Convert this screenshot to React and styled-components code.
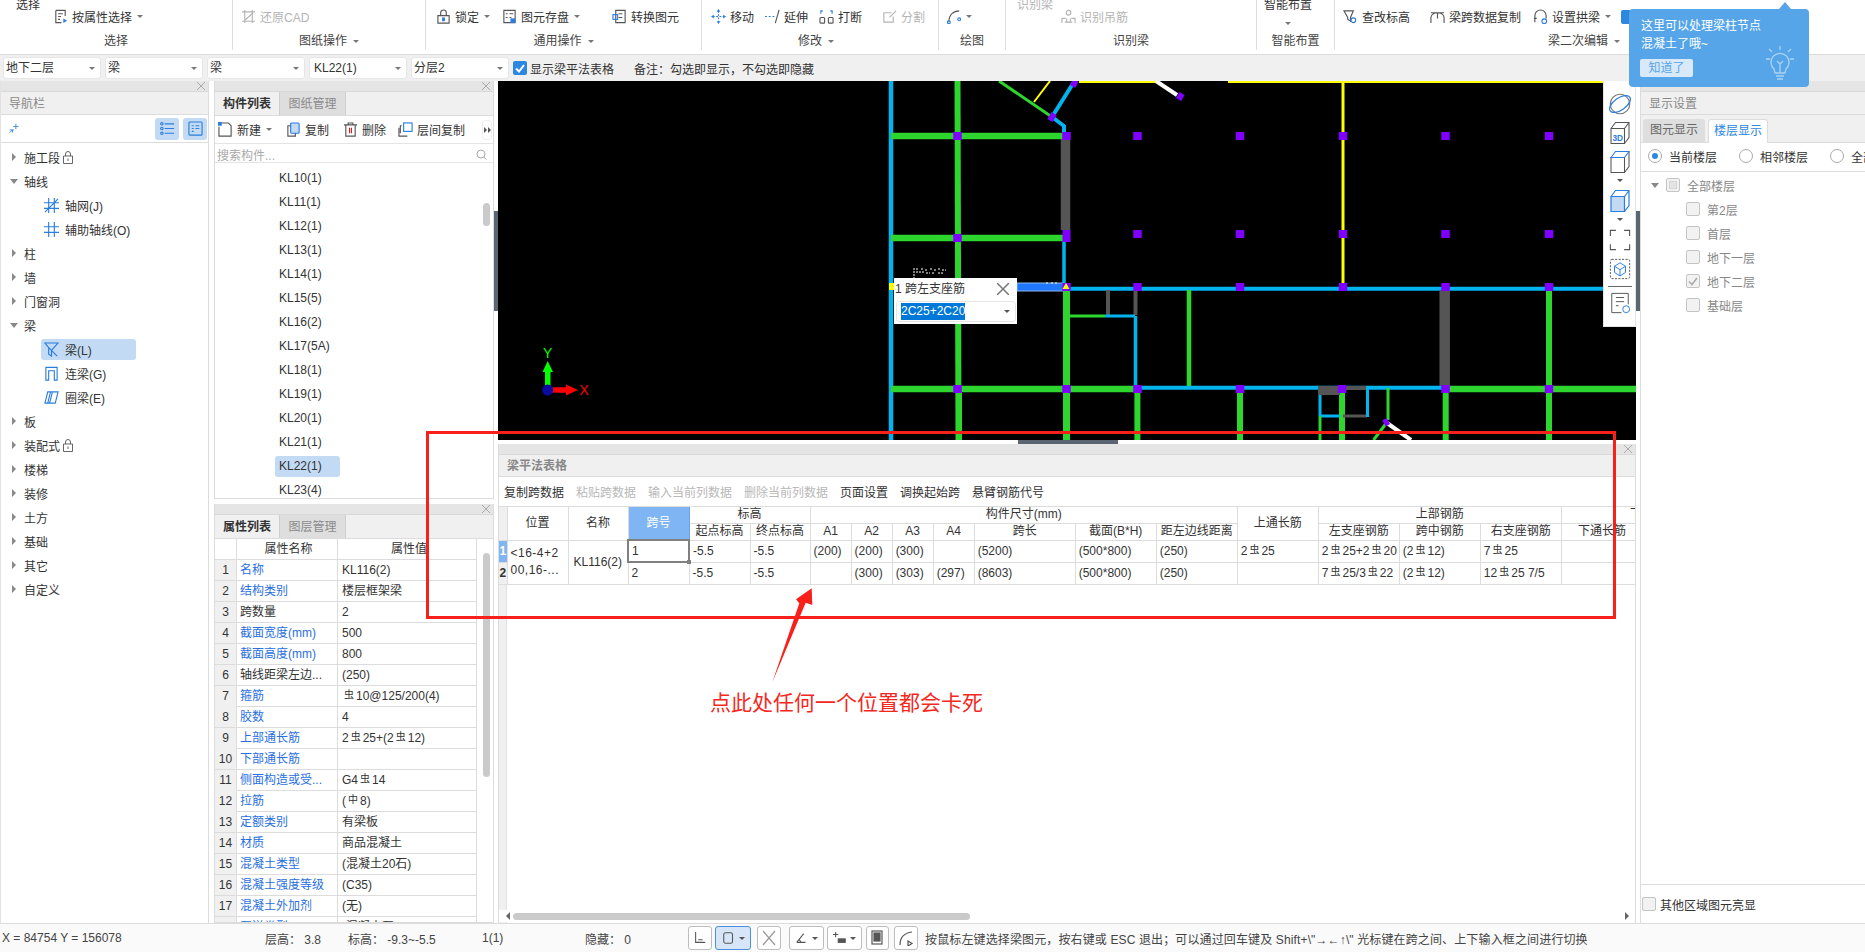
import React from 'react';
import styled, { createGlobalStyle } from 'styled-components';

const FONT = '"Liberation Sans", "Noto Sans CJK SC", sans-serif';

const Global = createGlobalStyle`
    html, body { margin: 0; padding: 0; background: #fff; }
    body { font-family: ${FONT}; font-size: 12px; color: #333; overflow: hidden; }
    * { box-sizing: border-box; }
`;

const Page = styled.div`
    position: relative;
    width: 1865px;
    height: 952px;
    overflow: hidden;
    display: flex;
    flex-direction: column;
`;

/* ---------- ribbon ---------- */
const Ribbon = styled.div`
    height: 55px;
    display: flex;
    border-bottom: 1px solid #dcdcdc;
    background: #fff;
    flex: none;
`;
const Group = styled.div`
    width: ${p => p.$w}px;
    height: 50px;
    flex: none;
    position: relative;
    border-right: ${p => (p.$last ? 'none' : '1px solid #dedede')};
    display: flex;
    flex-direction: column;
`;
const GroupBody = styled.div`
    height: 33px;
    display: flex;
    align-items: flex-start;
`;
const GroupLabel = styled.div`
    height: 17px;
    line-height: 17px;
    font-size: 12px;
    color: #444;
    display: flex;
    justify-content: ${p => (p.$start ? 'flex-start' : 'center')};
    gap: 6px;
    align-items: center;
    padding-left: ${p => p.$pad || 0}px;
    transform: translateX(${p => p.$dx || 0}px);
`;
const Tool = styled.div`
    display: flex;
    align-items: center;
    gap: 4px;
    height: 22px;
    margin-top: 5px;
    margin-left: ${p => p.$ml || 0}px;
    white-space: nowrap;
    flex: none;
    color: ${p => (p.$off ? '#b4b4b4' : '#333')};
`;
const StackedTool = styled.div`
    width: ${p => p.$w}px;
    flex: none;
    margin-top: -3px;
    margin-left: ${p => p.$ml || 0}px;
    text-align: center;
    line-height: 16px;
    color: ${p => (p.$off ? '#b4b4b4' : '#333')};
`;
const Caret = styled.span`
    display: inline-block;
    width: 0;
    height: 0;
    margin-left: ${p => p.$ml ?? 1}px;
    border-left: 3px solid transparent;
    border-right: 3px solid transparent;
    border-top: 3px solid ${p => p.$c || '#777'};
`;

/* ---------- select row ---------- */
const SelectRow = styled.div`
    height: 26px;
    flex: none;
    background: #f0f0f0;
    display: flex;
    align-items: center;
    padding-left: 3px;
    gap: 4px;
`;
const Select = styled.div`
    width: 98px;
    height: 22px;
    background: #fff;
    border: 1px solid #e6e6e6;
    border-radius: 3px;
    padding-left: ${p => p.$pad || 2}px;
    line-height: 20px;
    display: flex;
    justify-content: space-between;
    align-items: center;
    padding-right: 5px;
    color: #333;
`;
const ShowCheck = styled.span`
    width: 14px;
    height: 14px;
    background: #2b87e0;
    border-radius: 2px;
    display: flex;
    align-items: center;
    justify-content: center;
    flex: none;
`;
const ShowLabel = styled.span`
    margin-left: -1px;
    white-space: nowrap;
`;
const Note = styled.span`
    margin-left: 16px;
    white-space: nowrap;
`;

/* ---------- body columns ---------- */
const Main = styled.div`
    flex: 1;
    display: flex;
    min-height: 0;
`;
const LeftCol = styled.div`
    width: 209px;
    flex: none;
    border-right: 1px solid #dcdcdc;
    border-left: 1px solid #e2e2e2;
    display: flex;
    flex-direction: column;
`;
const MiddleCol = styled.div`
    width: 280px;
    margin-left: 5px;
    flex: none;
    display: flex;
    flex-direction: column;
`;
const Pane = styled.div`
    border: 1px solid #dcdcdc;
    border-top: none;
    display: flex;
    flex-direction: column;
    height: ${p => (p.$h ? p.$h + 'px' : 'auto')};
    flex: ${p => (p.$h ? 'none' : '1')};
    margin-top: ${p => p.$mt || 0}px;
    min-height: 0;
    overflow: hidden;
    background: #fff;
`;
const DockBar = styled.div`
    height: 11px;
    flex: none;
    background: #e5e5e5;
    border-bottom: 1px solid #d8d8d8;
    display: flex;
    justify-content: flex-end;
    align-items: center;
    padding-right: 3px;
`;
const PanelTitle = styled.div`
    height: ${p => p.$h || 23}px;
    flex: none;
    background: #f0f0f0;
    border-bottom: 1px solid #dcdcdc;
    line-height: ${p => (p.$h || 23) + 1}px;
    padding-left: 8px;
    color: #888;
    font-weight: ${p => (p.$bold ? 700 : 400)};
`;
const IconRow = styled.div`
    height: 28px;
    flex: none;
    display: flex;
    align-items: center;
    justify-content: space-between;
    border-bottom: 1px solid #dcdcdc;
    padding: 0 1px 0 8px;
`;
const ToggleSet = styled.div`
    display: flex;
    gap: 4px;
`;
const Toggle = styled.div`
    width: 24px;
    height: 22px;
    background: #c2daf3;
    border-radius: 3px;
    display: flex;
    align-items: center;
    justify-content: center;
`;
const Tree = styled.div`
    padding-top: 2px;
`;
const TreeRow = styled.div`
    height: 24px;
    display: flex;
    align-items: center;
    padding-left: ${p => (p.$child ? 15 : 11)}px;
    color: #333;
    white-space: nowrap;
`;
const Arrow = styled.span`
    width: ${p => p.$w || 12}px;
    flex: none;
    display: flex;
    &::before {
        content: '';
        display: block;
        border-style: solid;
        ${p => (p.$open
            ? 'border-width: 5px 4px 0 4px; border-color: #888 transparent transparent transparent; margin-left: -2px;'
            : 'border-width: 4px 0 4px 4px; border-color: transparent transparent transparent #888;')}
    }
`;
const ChildItem = styled.div`
    margin-left: 25px;
    width: 95px;
    height: 21px;
    border-radius: 3px;
    padding-left: 3px;
    display: flex;
    align-items: center;
    gap: 6px;
    background: ${p => (p.$on ? '#c2daf3' : 'transparent')};
`;
const LockMark = styled.span`
    margin-left: 3px;
    display: flex;
`;

const TabRow = styled.div`
    height: 24px;
    flex: none;
    background: #f0f0f0;
    border-bottom: 1px solid #dcdcdc;
    display: flex;
`;
const Tab = styled.div`
    width: ${p => (p.$on ? 65 : 66)}px;
    text-align: center;
    line-height: 25px;
    font-weight: ${p => (p.$on ? 700 : 400)};
    color: ${p => (p.$on ? '#333' : '#8a8a8a')};
    background: ${p => (p.$on ? '#f0f0f0' : '#dedede')};
    border-right: 1px solid #cfcfcf;
`;
const ListTools = styled.div`
    height: 28px;
    flex: none;
    display: flex;
    align-items: center;
    padding-left: 3px;
    position: relative;
    border-bottom: 1px solid #e4e4e4;
`;
const ListTool = styled.div`
    display: flex;
    align-items: center;
    gap: 4px;
    margin-right: ${p => p.$mr || 10}px;
    white-space: nowrap;
`;
const More = styled.div`
    position: absolute;
    right: 1px;
    top: 4px;
    width: 10px;
    height: 20px;
    border: 1px solid #eee;
    border-radius: 3px;
    display: flex;
    align-items: center;
    justify-content: center;
`;
const Search = styled.div`
    height: 19px;
    flex: none;
    border-bottom: 1px solid #e4e4e4;
    color: #aaa;
    padding-left: 2px;
    padding-top: 2px;
    display: flex;
    justify-content: space-between;
    align-items: center;
    padding-right: 6px;
`;
const ListBody = styled.div`
    flex: 1;
    position: relative;
    overflow: hidden;
    padding-top: 3px;
`;
const ListRow = styled.div`
    height: 24px;
    line-height: 24px;
    padding-left: 64px;
    color: #333;
    position: relative;
    span {
        display: inline-block;
        line-height: 21px;
        width: 65px;
        padding-left: 4px;
        margin-left: -4px;
        border-radius: 3px;
        background: ${p => (p.$on ? '#c2daf3' : 'transparent')};
    }
`;
const Thumb = styled.div`
    position: absolute;
    right: 3px;
    top: ${p => p.$top}px;
    width: 7px;
    height: ${p => p.$h}px;
    background: #cacaca;
    border-radius: 4px;
`;

const PropGrid = styled.div`
    position: relative;
    flex: 1;
    overflow: hidden;
`;
const PropRow = styled.div`
    display: grid;
    grid-template-columns: 22px 101px 139px;
    height: 21px;
    border-bottom: 1px solid #dcdcdc;
    width: 262px;
    color: #333;
`;
const PropNum = styled.div`
    background: ${p => (p.$head ? '#fff' : '#f0f0f0')};
    border-right: 1px solid #dcdcdc;
    text-align: center;
    line-height: 20px;
`;
const PropName = styled.div`
    border-right: 1px solid #dcdcdc;
    line-height: 20px;
    padding-left: 3px;
    white-space: nowrap;
    overflow: hidden;
    text-align: ${p => (p.$head ? 'center' : 'left')};
    color: ${p => (p.$link ? '#2a6fe0' : '#333')};
`;
const PropVal = styled.div`
    border-right: 1px solid #dcdcdc;
    line-height: 20px;
    padding-left: 4px;
    white-space: nowrap;
    text-align: ${p => (p.$head ? 'center' : 'left')};
`;

/* ---------- centre ---------- */
const Centre = styled.div`
    width: 1142px;
    flex: none;
    padding-left: 4px;
    display: flex;
    flex-direction: column;
    position: relative;
`;
const Canvas = styled.div`
    position: relative;
    height: 359px;
    flex: none;
    background: #000;
`;
const CanvasSvg = styled.svg`
    display: block;
    width: 1138px;
    height: 359px;
`;
const Handle = styled.div`
    width: 100px;
    height: 4px;
    background: #5b6672;
    margin-left: 520px;
    flex: none;
`;
const EditPopup = styled.div`
    position: absolute;
    left: 396px;
    top: 197px;
    width: 123px;
    height: 46px;
    background: #fff;
`;
const PopupHead = styled.div`
    height: 22px;
    line-height: 22px;
    padding-left: 1px;
    display: flex;
    justify-content: space-between;
    align-items: center;
    padding-right: 8px;
    color: #333;
`;
const PopupInput = styled.div`
    margin: 1px 1px 0 2px;
    height: 21px;
    border: 1px solid #e6e6e6;
    border-radius: 3px;
    padding-left: 4px;
    display: flex;
    align-items: center;
    justify-content: space-between;
    padding-right: 5px;
    mark {
        background: #0078d7;
        color: #fff;
        line-height: 17px;
        padding: 0;
        display: block;
    }
`;
const ViewBar = styled.div`
    position: absolute;
    right: 0;
    top: 0;
    width: 33px;
    height: 246px;
    background: #fff;
    border: 1px solid #e4e4e4;
    border-top: none;
    display: flex;
    flex-direction: column;
    align-items: center;
    padding-top: 11px;
`;
const ViewIcon = styled.div`
    height: ${p => p.$h || 29}px;
    flex: none;
    display: flex;
    justify-content: center;
    align-items: flex-start;
`;
const ViewRule = styled.div`
    width: 24px;
    height: 1px;
    flex: none;
    background: #666;
    margin: 1px 0 5px;
`;

/* ---------- beam table ---------- */
const BeamPanel = styled.div`
    flex: 1;
    display: flex;
    flex-direction: column;
    min-height: 0;
    border: 1px solid #dcdcdc;
    border-top: none;
    border-bottom: none;
    position: relative;
    overflow: hidden;
`;
const BeamTools = styled.div`
    height: 30px;
    flex: none;
    display: flex;
    align-items: center;
    padding-left: 5px;
    gap: 12px;
    border-bottom: 1px solid #dcdcdc;
    white-space: nowrap;
`;
const BeamTool = styled.span`
    color: ${p => (p.$off ? '#b8b8b8' : '#333')};
`;
const GutterStrip = styled.div`
    position: absolute;
    left: 0;
    top: 63px;
    bottom: 0;
    width: 8px;
    background: #f0f0f0;
    border-right: 1px solid #e2e2e2;
`;
const BeamTable = styled.table`
    position: relative;
    border-collapse: collapse;
    table-layout: fixed;
    width: 1144px;
    color: #333;
    th, td {
        border: 1px solid #dcdcdc;
        font-weight: 400;
        padding: 0;
        white-space: nowrap;
        overflow: hidden;
        background: #fff;
    }
    th { text-align: center; height: 17px; line-height: 15px; }
    td { height: 21px; padding-left: 3px; line-height: 20px; }
    tr:first-child th { border-top: none; height: 16px; }
`;
const RowMark = styled.td`
    && {
        padding: 0;
        background: ${p => (p.$on ? '#7fb5f2' : '#f0f0f0')};
        color: ${p => (p.$on ? '#fff' : '#333')};
        font-weight: 700;
        text-align: center;
        border-left: none;
    }
`;
const GutterHead = styled.th`
    && { background: #f0f0f0; border-left: none; }
`;
const SpanHead = styled.th`
    && { background: #7fb5f2; color: #fff; border: 1px solid #66a3ea; }
`;
const LastHead = styled.th`
    && { text-align: left; padding-left: 68px; }
`;
const ActiveCell = styled.td`
    && {
        border: 2px solid #808080;
        position: relative;
        overflow: visible;
    }
    &::after {
        content: '';
        position: absolute;
        right: -3px;
        bottom: -3px;
        width: 4px;
        height: 4px;
        background: #808080;
    }
`;
const WrapCell = styled.td`
    && { line-height: 17px; padding-left: 3px; letter-spacing: .5px; }
`;
const NameCell = styled.td`
    && { text-align: center; padding: 0; }
`;
const HScroll = styled.div`
    position: absolute;
    left: 0;
    right: 0;
    bottom: 1px;
    height: 12px;
    background: #fff;
    z-index: 1;
    display: flex;
    align-items: center;
    padding-left: 9px;
`;
const HThumb = styled.div`
    width: 457px;
    height: 7px;
    margin-left: 5px;
    background: #cacaca;
    border-radius: 4px;
`;
const ScrollEnd = styled.span`
    position: absolute;
    ${p => (p.$right ? 'right: 6px;' : 'left: 7px;')}
    border-style: solid;
    border-width: 4px 0 4px 0;
    border-color: transparent;
    ${p => (p.$right ? 'border-left: 4px solid #666;' : 'border-right: 4px solid #666;')}
`;
const Rebar = styled.span`
    font-size: 10px;
    position: relative;
    top: -2px;
    margin: 0 2px;
`;

/* ---------- right panel ---------- */
const RightCol = styled.div`
    width: 225px;
    margin-left: 4px;
    flex: none;
    border-left: 1px solid #dcdcdc;
    display: flex;
    flex-direction: column;
    position: relative;
`;
const RightTabs = styled.div`
    height: 28px;
    flex: none;
    display: flex;
    padding: 4px 0 0 2px;
    gap: 3px;
    background: #f0f0f0;
    border-bottom: 1px solid #dcdcdc;
`;
const RightTab = styled.div`
    width: ${p => (p.$on ? 60 : 62)}px;
    height: 24px;
    text-align: center;
    line-height: 22px;
    border-radius: 3px 3px 0 0;
    background: ${p => (p.$on ? '#fff' : '#dedede')};
    border: ${p => (p.$on ? '1px solid #dcdcdc' : 'none')};
    border-bottom: none;
    color: ${p => (p.$on ? '#2b87e0' : '#666')};
`;
const RadioRow = styled.div`
    height: 29px;
    flex: none;
    display: flex;
    align-items: center;
    padding: 0 0 2px 7px;
    border-bottom: 1px solid #dcdcdc;
    white-space: nowrap;
    overflow: hidden;
`;
const RadioItem = styled.div`
    display: flex;
    align-items: center;
    gap: 7px;
    width: 91px;
    flex: none;
`;
const Radio = styled.span`
    width: 14px;
    height: 14px;
    border: 1px solid #aaa;
    border-radius: 50%;
    flex: none;
    display: flex;
    align-items: center;
    justify-content: center;
    &::after {
        content: '';
        width: 6px;
        height: 6px;
        border-radius: 50%;
        background: ${p => (p.$on ? '#2b87e0' : 'transparent')};
    }
`;
const FloorTree = styled.div`
    flex: 1;
    padding-top: 1px;
    border-bottom: 1px solid #dcdcdc;
`;
const FloorRow = styled.div`
    height: 24px;
    display: flex;
    align-items: center;
    gap: 7px;
    padding-left: ${p => (p.$root ? 12 : 45)}px;
    color: #888;
`;
const Box = styled.span`
    width: 14px;
    height: 14px;
    flex: none;
    background: #f2f2f2;
    border: 1px solid #c4c4c4;
    border-radius: 2px;
    display: flex;
    align-items: center;
    justify-content: center;
`;
const RootMark = styled.span`
    width: 8px;
    height: 8px;
    background: #e4e4e4;
    border: 1px solid #d4d4d4;
`;
const RightFoot = styled.div`
    height: 38px;
    flex: none;
    display: flex;
    align-items: center;
    gap: 4px;
    padding-left: 1px;
    color: #333;
`;
const SideHandle = styled.div`
    position: absolute;
    left: ${p => p.$left}px;
    top: 130px;
    width: 4px;
    height: 100px;
    background: #5b6672;
`;

/* ---------- status ---------- */
const Status = styled.div`
    height: 29px;
    flex: none;
    border-top: 1px solid #dcdcdc;
    background: #fafafa;
    display: flex;
    align-items: center;
    white-space: nowrap;
    position: relative;
    color: #444;
`;
const StatusText = styled.span`
    position: relative;
    width: ${p => p.$w}px;
    padding-left: ${p => p.$pl || 0}px;
    flex: none;
`;
const StatusBtn = styled.div`
    width: ${p => p.$w}px;
    height: 24px;
    flex: none;
    margin-right: ${p => p.$mr || 3}px;
    border: 1px solid ${p => (p.$on ? '#4a90dc' : '#bdbdbd')};
    background: ${p => (p.$on ? '#d6e6f8' : '#fff')};
    border-radius: 3px;
    display: flex;
    align-items: center;
    justify-content: center;
    gap: 3px;
`;
const Hint = styled.span`
    margin-left: 1px;
    letter-spacing: .13px;
`;

/* ---------- overlays ---------- */
const Tip = styled.div`
    position: absolute;
    left: 1629px;
    top: 9px;
    width: 180px;
    height: 78px;
    background: #55a5e8;
    border-radius: 4px;
    color: #fff;
    padding: 8px 12px;
    line-height: 18px;
    &::before {
        content: '';
        position: absolute;
        right: 18px;
        top: -7px;
        border-left: 6px solid transparent;
        border-right: 6px solid transparent;
        border-bottom: 7px solid #55a5e8;
    }
`;
const TipBtn = styled.div`
    position: absolute;
    left: 11px;
    top: 50px;
    width: 53px;
    height: 18px;
    border-radius: 2px;
    background: #d8e9fa;
    color: #55a5e8;
    text-align: center;
    line-height: 18px;
`;
const TipBulb = styled.svg`
    position: absolute;
    right: 13px;
    top: 36px;
`;
const BehindTipCheck = styled.span`
    position: absolute;
    left: 1621px;
    top: 10px;
    width: 14px;
    height: 14px;
    background: #2b87e0;
    border-radius: 2px;
`;
const RedBox = styled.div`
    position: absolute;
    left: 426px;
    top: 431px;
    width: 1190px;
    height: 188px;
    border: 3px solid #f8201a;
    pointer-events: none;
`;
const RedArrow = styled.svg`
    position: absolute;
    left: 760px;
    top: 580px;
`;
const RedNote = styled.div`
    position: absolute;
    left: 710px;
    top: 689px;
    font-size: 21px;
    line-height: 28px;
    color: #f5281e;
    white-space: nowrap;
`;

/* ---------- icons ---------- */
const IcoSvg = styled.svg`
    flex: none;
`;
const Ico = ({ children, s = 15, c = '#2b7de0', w = 1.2 }) => (
    <IcoSvg width={s} height={s} viewBox="0 0 16 16" fill="none" stroke={c} strokeWidth={w}>
        {children}
    </IcoSvg>
);
const Close = ({ s = 8, c = '#aaa' }) => (
    <svg width={s} height={s} viewBox="0 0 8 8" stroke={c} strokeWidth="1"><path d="M0 0 8 8M8 0 0 8" /></svg>
);
const Lock = () => (
    <svg width="10" height="13" viewBox="0 0 10 13" fill="none" stroke="#666"><path d="M2.5 5V3a2.5 2.5 0 0 1 5 0v2M.5 5h9v7.5h-9z" /><path d="M5 7.5v2.5" /></svg>
);
const Rb = () => <Rebar>虫</Rebar>;

const COLS = [8, 61, 60, 61, 61, 60, 41, 41, 41, 41, 101, 81, 81, 81, 81, 81, 81, 81];

const LIST = ['KL10(1)', 'KL11(1)', 'KL12(1)', 'KL13(1)', 'KL14(1)', 'KL15(5)', 'KL16(2)', 'KL17(5A)', 'KL18(1)', 'KL19(1)', 'KL20(1)', 'KL21(1)', 'KL22(1)', 'KL23(4)'];
const PROPS = [
    ['名称', 'KL116(2)', 1], ['结构类别', '楼层框架梁', 1], ['跨数量', '2', 0], ['截面宽度(mm)', '500', 1],
    ['截面高度(mm)', '800', 1], ['轴线距梁左边...', '(250)', 0],
    ['箍筋', <><Rb />10@125/200(4)</>, 1], ['胶数', '4', 1],
    ['上部通长筋', <>2<Rb />25+(2<Rb />12)</>, 1], ['下部通长筋', '', 1],
    ['侧面构造或受...', <>G4<Rb />14</>, 1], ['拉筋', <>(<Rebar>中</Rebar>8)</>, 1],
    ['定额类别', '有梁板', 1], ['材质', '商品混凝土', 1], ['混凝土类型', '(混凝土20石)', 1],
    ['混凝土强度等级', '(C35)', 1], ['混凝土外加剂', '(无)', 1], ['泵送类型', '(混凝土泵)', 1],
];

/* purple grid nodes on the plan */
const NODE_ROWS = [
    [136, [957.5, 1066.5, 1137.5, 1240, 1343, 1445.5, 1549]],
    [234, [1137.5, 1240, 1343, 1445.5, 1549]],
    [238, [957.5]],
    [287, [1066.5, 1137.5, 1240, 1343, 1445.5, 1549]],
    [389, [957.5, 1066.5, 1137.5, 1240, 1342, 1445.5, 1549]],
];
const BLUE = '#00b4f0';
const GREEN = '#2ed52e';
const GREY = '#555';
const LINES = [
    // x1 y1 x2 y2 colour width
    [891, 81, 891, 440, BLUE, 4.5],
    [957.5, 81, 958.5, 440, GREEN, 6],
    [891, 136, 1064, 136, GREEN, 6.5],
    [891, 238, 1064, 238, GREEN, 6.5],
    [891, 389, 1135, 389, GREEN, 6.5],
    [999, 81, 1052, 117, GREEN, 3],
    [1050, 81, 1034, 102, '#ffff00', 2],
    [1079, 82, 1157, 82, '#ffff00', 2],
    [1228, 82, 1604, 82, '#ffff00', 2],
    [1156, 81, 1177, 95, '#fff', 4],
    [1074, 82, 1052, 117, BLUE, 4],
    [1052, 117, 1064, 126, BLUE, 4],
    [1064, 125, 1064, 136, BLUE, 4],
    [1065.5, 139, 1065.5, 230, GREY, 9.5],
    [1064, 240, 1064, 288, BLUE, 3.5],
    [1343, 81, 1343, 287, '#ffff00', 3],
    [1064, 288.7, 1604, 288.7, BLUE, 4],
    [1066.5, 291, 1066.5, 440, GREEN, 7],
    [1108, 290, 1108, 315, GREY, 4],
    [1135.5, 290, 1135.5, 315, GREY, 4],
    [1066, 316, 1105, 316, GREEN, 3],
    [1105, 316, 1135, 316, BLUE, 3],
    [1135.5, 316, 1135.5, 389, BLUE, 3.5],
    [1189, 290, 1189, 388, GREEN, 4.5],
    [1135, 387.7, 1442, 387.7, BLUE, 4],
    [1345, 388, 1366, 388, GREY, 4],
    [1444.7, 290, 1444.7, 386, GREY, 10.5],
    [1549, 291, 1549, 440, GREEN, 6],
    [1447, 389, 1636, 389, GREEN, 6.5],
    [959, 389, 959, 440, GREEN, 6],
    [1137.4, 392, 1137.4, 440, GREEN, 6],
    [1240, 392, 1240, 440, GREEN, 6],
    [1342, 392, 1342, 440, GREEN, 6],
    [1445.7, 392, 1445.7, 440, GREEN, 6],
    [1320, 390, 1320, 416, BLUE, 3],
    [1320, 416, 1340, 416, BLUE, 3],
    [1343, 416, 1367, 416, GREY, 3],
    [1367.5, 388, 1367.5, 417, BLUE, 3],
    [1320, 416, 1320, 440, GREEN, 3],
    [1388, 388, 1388, 420, GREEN, 3],
    [1386.5, 423, 1373.5, 440, GREEN, 3],
    [1387, 423, 1411, 440, '#fff', 4],
];

const PlanDrawing = () => (
    <CanvasSvg viewBox="498 81 1138 359">
        {LINES.map(([a, b, c, d, col, w], i) => (
            <line key={i} x1={a} y1={b} x2={c} y2={d} stroke={col} strokeWidth={w} />
        ))}
        <rect x="1318" y="386" width="22" height="9" fill={GREY} />
        <rect x="1017" y="283" width="46" height="8" fill="#1f78ff" stroke="#8db8f0" />
        {NODE_ROWS.map(([y, xs]) => xs.map(x => (
            <rect key={`${x}-${y}`} x={x - 4.25} y={y - 4} width="8.5" height="8" fill="#8000ff" />
        )))}
        <rect x="1062.5" y="230" width="8" height="12" fill="#8000ff" />
        <rect x="1049" y="113" width="6" height="8" fill="#8000ff" transform="rotate(30 1052 117)" />
        <rect x="1071" y="80" width="6" height="7" fill="#8000ff" transform="rotate(30 1074 84)" />
        <rect x="1177" y="93" width="6" height="7" fill="#8000ff" transform="rotate(30 1180 97)" />
        <rect x="1384" y="419" width="5" height="7" fill="#8000ff" transform="rotate(-30 1386 423)" />
        <path d="M1066 283l3.5 6h-7z" fill="#ff0" />
        <rect x="889" y="283" width="5" height="7" fill="#ff0" />
        <path d="M914 268v10M916 269l3 0M921 269h2M925 270h3M930 269h2M934 270h3M938 269h2M942 270h4M916 272h8M926 273h4M932 273h3M938 273h6M1046 283h3M1051 283h2M1055 283h3" stroke="#fff" strokeWidth="1" strokeDasharray="2 1" fill="none" />
        {/* axis */}
        <rect x="545" y="372" width="5.5" height="14" fill="#00ff00" />
        <path d="M542.500 372l5.200-11 5.300 11z" fill="#00ff00" />
        <rect x="552" y="387.300" width="14" height="5.400" fill="#ff0000" />
        <path d="M566 384.500l12 5.500-12 5.500z" fill="#ff0000" />
        <circle cx="547.700" cy="390" r="5.500" fill="#0a0aa0" />
        <text x="543" y="358" fill="#00ff00" fontSize="14" fontFamily="Liberation Sans">Y</text>
        <text x="579.500" y="395" fill="#ff0000" fontSize="14" fontFamily="Liberation Sans">X</text>
    </CanvasSvg>
);

export default function App() {
    const G = '#b4b4b4';
    return (
        <Page>
            <Global />
            <Ribbon>
                <Group $w={233}>
                    <GroupBody>
                        <StackedTool $w={24} $ml={16}>选择</StackedTool>
                        <Tool $ml={13}>
                            <Ico c="#555"><path d="M3 1.5h10v6M9 14.5H3v-13M5.5 5h5M5.5 8h3M5.5 11h2" /><path d="M11 10l4 2.500-4 2.500z" fill="#2b7de0" stroke="none" /></Ico>
                            按属性选择<Caret />
                        </Tool>
                    </GroupBody>
                    <GroupLabel>选择</GroupLabel>
                </Group>
                <Group $w={193}>
                    <GroupBody>
                        <Tool $ml={8} $off>
                            <Ico c={G}><path d="M1 3h14M1 13h14M4 1v14M12 1v14M13 4 4 12" /></Ico>还原CAD
                        </Tool>
                    </GroupBody>
                    <GroupLabel>图纸操作<Caret $ml={0} /></GroupLabel>
                </Group>
                <Group $w={276}>
                    <GroupBody>
                        <Tool $ml={10}>
                            <Ico c="#555"><path d="M2 7h12v8H2zM5 7V4a3 3 0 0 1 6 0v3" /><rect x="6.500" y="9" width="3" height="4" fill="#2b7de0" stroke="none" /></Ico>锁定<Caret />
                        </Tool>
                        <Tool $ml={12}>
                            <Ico c="#555"><path d="M2 1.500h12v13H2zM4 5h2M8 5h4M4 9h2M8 9h2" /><rect x="9" y="10" width="5" height="5" fill="#2b7de0" stroke="none" /></Ico>图元存盘<Caret />
                        </Tool>
                        <Tool $ml={32}>
                            <Ico c="#555"><path d="M4 1.500h10v13H4zM7 5h4M7 9h4" /><rect x="1" y="6" width="5" height="5" stroke="#2b7de0" /></Ico>转换图元
                        </Tool>
                    </GroupBody>
                    <GroupLabel>通用操作<Caret $ml={0} /></GroupLabel>
                </Group>
                <Group $w={237}>
                    <GroupBody>
                        <Tool $ml={9}>
                            <Ico><path d="M8 2v12M2 8h12" strokeDasharray="2 1.500" /><path d="M8 0l2 3H6zM8 16l2-3H6zM0 8l3-2v4zM16 8l-3-2v4z" fill="#2b7de0" stroke="none" /></Ico>移动
                        </Tool>
                        <Tool $ml={11}>
                            <Ico c="#2b7de0"><path d="M0 8h2M4 8h2M8 8h2" /><path d="M11 15 15 1" stroke="#555" /></Ico>延伸
                        </Tool>
                        <Tool $ml={11}>
                            <Ico c="#555"><rect x="1" y="9" width="5" height="6" rx="1" /><rect x="10" y="9" width="5" height="6" rx="1" /><path d="M2 5V2h2M14 5V2h-2" stroke="#2b7de0" /></Ico>打断
                        </Tool>
                        <Tool $ml={20} $off>
                            <Ico c={G}><path d="M12 8v6H2V4h8M8 9l7-7" /></Ico>分割
                        </Tool>
                    </GroupBody>
                    <GroupLabel $dx={-4}>修改<Caret $ml={0} /></GroupLabel>
                </Group>
                <Group $w={67}>
                    <GroupBody>
                        <Tool $ml={8}>
                            <Ico><path d="M2 14C2 6 7 2 13 2" stroke="#555" /><circle cx="2" cy="14" r="1.500" /><circle cx="13" cy="11" r="1.500" /></Ico><Caret $ml={0} />
                        </Tool>
                    </GroupBody>
                    <GroupLabel>绘图</GroupLabel>
                </Group>
                <Group $w={251}>
                    <GroupBody>
                        <StackedTool $w={36} $off $ml={11}>识别梁</StackedTool>
                        <Tool $ml={8} $off>
                            <Ico c={G}><circle cx="8" cy="4" r="2.500" /><path d="M1 15v-5h4M15 15v-5h-4M4 14h8M6 10v4M10 10v4" /></Ico>识别吊筋
                        </Tool>
                    </GroupBody>
                    <GroupLabel>识别梁</GroupLabel>
                </Group>
                <Group $w={78}>
                    <GroupBody>
                        <StackedTool $w={48} $ml={7}>智能布置<br /><Caret $ml={0} /></StackedTool>
                    </GroupBody>
                    <GroupLabel>智能布置</GroupLabel>
                </Group>
                <Group $w={500} $last>
                    <GroupBody>
                        <Tool $ml={8}>
                            <Ico c="#555"><path d="M1 2h10L8 9v4l-3-2V9z" /><circle cx="11" cy="12" r="2.500" stroke="#2b7de0" /></Ico>查改标高
                        </Tool>
                        <Tool $ml={20}>
                            <Ico c="#555"><path d="M1 4h14M1 15V9a7 5 0 0 1 14 0v6M8 4v6" /></Ico>梁跨数据复制
                        </Tool>
                        <Tool $ml={12}>
                            <Ico c="#555"><path d="M2 14V7a6 6 0 0 1 12 0v3M1 10h3" /><circle cx="12" cy="13" r="2.500" stroke="#2b7de0" /></Ico>设置拱梁<Caret />
                        </Tool>
                    </GroupBody>
                    <GroupLabel $start $pad={213}>梁二次编辑<Caret $ml={0} /></GroupLabel>
                </Group>
            </Ribbon>
            <BehindTipCheck />

            <SelectRow>
                <Select>地下二层<Caret /></Select>
                <Select>梁<Caret /></Select>
                <Select>梁<Caret /></Select>
                <Select $pad={4}>KL22(1)<Caret /></Select>
                <Select>分层2<Caret /></Select>
                <ShowCheck>
                    <svg width="10" height="9" viewBox="0 0 10 9" fill="none" stroke="#fff" strokeWidth="2"><path d="M1 4.500 4 7.500 9 1" /></svg>
                </ShowCheck>
                <ShowLabel>显示梁平法表格</ShowLabel>
                <Note>备注：勾选即显示，不勾选即隐藏</Note>
            </SelectRow>

            <Main>
                <LeftCol>
                    <DockBar><Close /></DockBar>
                    <PanelTitle>导航栏</PanelTitle>
                    <IconRow>
                        <Ico s={11}><path d="M1 14l4-4M5 14v-4M1 10h6M10 1v8M6 5h8" /></Ico>
                        <ToggleSet>
                            <Toggle><Ico><circle cx="2" cy="3" r="1.300" /><circle cx="2" cy="8" r="1.300" /><circle cx="2" cy="13" r="1.300" /><path d="M5 3h10M5 8h10M5 13h10" /></Ico></Toggle>
                            <Toggle><Ico><rect x="1" y="1" width="14" height="14" rx="1" /><path d="M4 5h2M8 5h4M4 8h2M8 8h4M4 11h2" /></Ico></Toggle>
                        </ToggleSet>
                    </IconRow>
                    <Tree>
                        <TreeRow><Arrow />施工段<LockMark><Lock /></LockMark></TreeRow>
                        <TreeRow><Arrow $open />轴线</TreeRow>
                        <TreeRow $child>
                            <ChildItem>
                                <Ico><path d="M5 0v16M11 0v16M0 5h16M0 11h16M1 15 15 1" /></Ico>轴网(J)
                            </ChildItem>
                        </TreeRow>
                        <TreeRow $child>
                            <ChildItem>
                                <Ico><path d="M5 0v16M11 0v16M0 5h16M0 11h16" /></Ico>辅助轴线(O)
                            </ChildItem>
                        </TreeRow>
                        <TreeRow><Arrow />柱</TreeRow>
                        <TreeRow><Arrow />墙</TreeRow>
                        <TreeRow><Arrow />门窗洞</TreeRow>
                        <TreeRow><Arrow $open />梁</TreeRow>
                        <TreeRow $child>
                            <ChildItem $on>
                                <Ico><path d="M1 1h14L8 9v6L5 13V6zM5 6l9 9" /></Ico>梁(L)
                            </ChildItem>
                        </TreeRow>
                        <TreeRow $child>
                            <ChildItem>
                                <Ico><path d="M2 15V1.500h12V15h-3V5H5v10z" /></Ico>连梁(G)
                            </ChildItem>
                        </TreeRow>
                        <TreeRow $child>
                            <ChildItem>
                                <Ico><path d="M4 2h11l-3 12H1zM7 2 4 14M9 2 6 14" /></Ico>圈梁(E)
                            </ChildItem>
                        </TreeRow>
                        <TreeRow><Arrow />板</TreeRow>
                        <TreeRow><Arrow />装配式<LockMark><Lock /></LockMark></TreeRow>
                        <TreeRow><Arrow />楼梯</TreeRow>
                        <TreeRow><Arrow />装修</TreeRow>
                        <TreeRow><Arrow />土方</TreeRow>
                        <TreeRow><Arrow />基础</TreeRow>
                        <TreeRow><Arrow />其它</TreeRow>
                        <TreeRow><Arrow />自定义</TreeRow>
                    </Tree>
                </LeftCol>

                <MiddleCol>
                    <Pane $h={418}>
                        <DockBar><Close /></DockBar>
                        <TabRow><Tab $on>构件列表</Tab><Tab>图纸管理</Tab></TabRow>
                        <ListTools>
                            <ListTool $mr={14}>
                                <Ico c="#555"><path d="M3 1h8l3 3v11H1V5" /><rect x="0" y="0" width="4" height="4" fill="#2b7de0" stroke="none" /></Ico>新建<Caret />
                            </ListTool>
                            <ListTool $mr={14}>
                                <Ico c="#555"><rect x="5" y="1" width="9" height="11" rx="1" fill="#c2daf3" stroke="#2b7de0" /><path d="M5 4H2v11h8v-3" /></Ico>复制
                            </ListTool>
                            <ListTool $mr={12}>
                                <Ico c="#555"><path d="M1 3h14M3 3v12h10V3M5.500 3V1h5v2" /><path d="M7 6v6M9 6v6" stroke="#d02020" /></Ico>删除
                            </ListTool>
                            <ListTool>
                                <Ico c="#555"><rect x="6" y="1" width="9" height="9" stroke="#2b7de0" /><path d="M4 4H2.500v8M1 6v9h9" /></Ico>层间复制
                            </ListTool>
                            <More>
                                <svg width="7" height="6" viewBox="0 0 7 6" fill="#555"><path d="M0 0l3 3-3 3zM4 0l3 3-3 3z" /></svg>
                            </More>
                        </ListTools>
                        <Search>
                            搜索构件...
                            <svg width="11" height="11" viewBox="0 0 11 11" fill="none" stroke="#aaa"><circle cx="5" cy="5" r="4" /><path d="M8 8l2.500 2.500" /></svg>
                        </Search>
                        <ListBody>
                            {LIST.map(k => (
                                <ListRow key={k} $on={k === 'KL22(1)'}><span>{k}</span></ListRow>
                            ))}
                            <Thumb $top={40} $h={23} />
                        </ListBody>
                    </Pane>
                    <Pane $mt={5}>
                        <DockBar><Close /></DockBar>
                        <TabRow><Tab $on>属性列表</Tab><Tab>图层管理</Tab></TabRow>
                        <PropGrid>
                            <PropRow>
                                <PropNum $head />
                                <PropName $head>属性名称</PropName>
                                <PropVal $head>属性值</PropVal>
                            </PropRow>
                            {PROPS.map(([n, v, l], i) => (
                                <PropRow key={n}>
                                    <PropNum>{i + 1}</PropNum>
                                    <PropName $link={!!l}>{n}</PropName>
                                    <PropVal>{v}</PropVal>
                                </PropRow>
                            ))}
                            <Thumb $top={14} $h={224} />
                        </PropGrid>
                    </Pane>
                </MiddleCol>

                <Centre>
                    <SideHandle $left={0} />
                    <Canvas>
                        <PlanDrawing />
                        <EditPopup>
                            <PopupHead>
                                <span>1 跨左支座筋</span>
                                <Close s={12} c="#777" />
                            </PopupHead>
                            <PopupInput><mark>2C25+2C20</mark><Caret $ml={0} $c="#555" /></PopupInput>
                        </EditPopup>
                        <ViewBar>
                            <ViewIcon>
                                <Ico s={24} w={0.8}><circle cx="8" cy="8" r="6.500" stroke="#777" /><ellipse cx="8" cy="8" rx="8" ry="4" transform="rotate(-35 8 8)" /></Ico>
                            </ViewIcon>
                            <ViewIcon>
                                <Ico s={24} c="#555" w={0.7}>
                                    <path d="M2 5h9v10H2zM2 5l3-4h9v10l-3 4M11 5l3-4" />
                                    <text x="3" y="13" fontSize="5.500" fill="#2b7de0" stroke="none" fontWeight="700" fontFamily="Liberation Sans">3D</text>
                                </Ico>
                            </ViewIcon>
                            <ViewIcon>
                                <Ico s={24} c="#555" w={0.7}><path d="M2 5h9v10H2zM11 15l3-4V1" /><path d="M2 5l3-4h9l-3 4z" stroke="#2b7de0" /></Ico>
                            </ViewIcon>
                            <ViewIcon $h={10}><Caret $ml={0} $c="#555" /></ViewIcon>
                            <ViewIcon $h={29}>
                                <Ico s={24} w={0.8}><path d="M2 5h9v10H2z" fill="#c2daf3" /><path d="M2 5l3-4h9v10l-3 4M11 5l3-4" /></Ico>
                            </ViewIcon>
                            <ViewIcon $h={11}><Caret $ml={0} $c="#555" /></ViewIcon>
                            <ViewIcon>
                                <Ico s={22} c="#555" w={0.8}><path d="M1 5V1h4M11 1h4v4M15 11v4h-4M5 15H1v-4" /></Ico>
                            </ViewIcon>
                            <ViewIcon $h={27}>
                                <Ico s={22} c="#555" w={0.7}><rect x="1" y="1" width="14" height="14" rx="1" strokeDasharray="1.500 1" /><path d="M8 3.500 12 6v4.500L8 13l-4-2.500V6zM4 6l4 2.500L12 6M8 8.500V13" stroke="#2b7de0" /></Ico>
                            </ViewIcon>
                            <ViewRule />
                            <ViewIcon>
                                <Ico s={22} c="#555" w={0.7}><path d="M14 9V1H2v14h7M5 4h6M5 7h6M5 10h2" /><circle cx="12.500" cy="12.500" r="2.500" stroke="#2b7de0" /></Ico>
                            </ViewIcon>
                        </ViewBar>
                    </Canvas>
                    <Handle />
                    <BeamPanel>
                        <DockBar><Close /></DockBar>
                        <PanelTitle $bold $h={22}>梁平法表格</PanelTitle>
                        <BeamTools>
                            <BeamTool>复制跨数据</BeamTool>
                            <BeamTool $off>粘贴跨数据</BeamTool>
                            <BeamTool $off>输入当前列数据</BeamTool>
                            <BeamTool $off>删除当前列数据</BeamTool>
                            <BeamTool>页面设置</BeamTool>
                            <BeamTool>调换起始跨</BeamTool>
                            <BeamTool>悬臂钢筋代号</BeamTool>
                        </BeamTools>
                        <GutterStrip />
                        <BeamTable>
                            <colgroup>{COLS.map((w, i) => <col key={i} style={{ width: w }} />)}</colgroup>
                            <thead>
                                <tr>
                                    <GutterHead rowSpan={2} />
                                    <th rowSpan={2}>位置</th>
                                    <th rowSpan={2}>名称</th>
                                    <SpanHead rowSpan={2}>跨号</SpanHead>
                                    <th colSpan={2}>标高</th>
                                    <th colSpan={7}>构件尺寸(mm)</th>
                                    <th rowSpan={2}>上通长筋</th>
                                    <th colSpan={3}>上部钢筋</th>
                                    <LastHead>下部钢筋</LastHead>
                                </tr>
                                <tr>
                                    <th>起点标高</th><th>终点标高</th>
                                    <th>A1</th><th>A2</th><th>A3</th><th>A4</th>
                                    <th>跨长</th><th>截面(B*H)</th><th>距左边线距离</th>
                                    <th>左支座钢筋</th><th>跨中钢筋</th><th>右支座钢筋</th><th>下通长筋</th>
                                </tr>
                            </thead>
                            <tbody>
                                <tr>
                                    <RowMark $on>1</RowMark>
                                    <WrapCell rowSpan={2}>&lt;16-4+2<br />00,16-...</WrapCell>
                                    <NameCell rowSpan={2}>KL116(2)</NameCell>
                                    <ActiveCell>1</ActiveCell>
                                    <td>-5.5</td><td>-5.5</td>
                                    <td>(200)</td><td>(200)</td><td>(300)</td><td></td>
                                    <td>(5200)</td><td>(500*800)</td><td>(250)</td>
                                    <td>2<Rb />25</td>
                                    <td>2<Rb />25+2<Rb />20</td>
                                    <td>(2<Rb />12)</td>
                                    <td>7<Rb />25</td>
                                    <td></td>
                                </tr>
                                <tr>
                                    <RowMark>2</RowMark>
                                    <td>2</td>
                                    <td>-5.5</td><td>-5.5</td>
                                    <td></td><td>(300)</td><td>(303)</td><td>(297)</td>
                                    <td>(8603)</td><td>(500*800)</td><td>(250)</td>
                                    <td></td>
                                    <td>7<Rb />25/3<Rb />22</td>
                                    <td>(2<Rb />12)</td>
                                    <td>12<Rb />25 7/5</td>
                                    <td></td>
                                </tr>
                            </tbody>
                        </BeamTable>
                        <HScroll>
                            <ScrollEnd />
                            <HThumb />
                            <ScrollEnd $right />
                        </HScroll>
                    </BeamPanel>
                </Centre>

                <RightCol>
                    <SideHandle $left={-5} />
                    <DockBar />
                    <PanelTitle>显示设置</PanelTitle>
                    <RightTabs>
                        <RightTab>图元显示</RightTab>
                        <RightTab $on>楼层显示</RightTab>
                    </RightTabs>
                    <RadioRow>
                        <RadioItem><Radio $on />当前楼层</RadioItem>
                        <RadioItem><Radio />相邻楼层</RadioItem>
                        <RadioItem><Radio />全部楼层</RadioItem>
                    </RadioRow>
                    <FloorTree>
                        <FloorRow $root><Arrow $open $w={6} /><Box><RootMark /></Box>全部楼层</FloorRow>
                        <FloorRow><Box />第2层</FloorRow>
                        <FloorRow><Box />首层</FloorRow>
                        <FloorRow><Box />地下一层</FloorRow>
                        <FloorRow>
                            <Box><svg width="10" height="9" viewBox="0 0 10 9" fill="none" stroke="#aaa" strokeWidth="1.500"><path d="M1 4.500 4 7.500 9 1" /></svg></Box>地下二层
                        </FloorRow>
                        <FloorRow><Box />基础层</FloorRow>
                    </FloorTree>
                    <RightFoot><Box />其他区域图元亮显</RightFoot>
                </RightCol>
            </Main>

            <Status>
                <StatusText $w={265} $pl={2}>X = 84754 Y = 156078</StatusText>
                <StatusText $w={83}>层高：&nbsp;3.8</StatusText>
                <StatusText $w={134}>标高：&nbsp;-9.3~-5.5</StatusText>
                <StatusText $w={103}>1(1)</StatusText>
                <StatusText $w={103}>隐藏：&nbsp;0</StatusText>
                <StatusBtn $w={24}><Ico s={14} c="#555"><path d="M3 1v12h11M6 10h5" /></Ico></StatusBtn>
                <StatusBtn $w={36} $mr={6} $on><Ico s={14} c="#555"><rect x="2" y="2" width="10" height="12" rx="2" /></Ico><Caret $ml={0} $c="#555" /></StatusBtn>
                <StatusBtn $w={24} $mr={8}><Ico s={16} c="#999"><path d="M2 1l12 14M14 1 2 15" /></Ico></StatusBtn>
                <StatusBtn $w={35}><Ico s={14} c="#555"><path d="M2 13 10 3M2 13h10M5 10l2 3" /></Ico><Caret $ml={0} $c="#555" /></StatusBtn>
                <StatusBtn $w={35} $mr={4}><Ico s={14} c="#555"><path d="M3 1v6M0 4h6" /><rect x="6" y="9" width="8" height="4" fill="#555" /></Ico><Caret $ml={0} $c="#555" /></StatusBtn>
                <StatusBtn $w={23} $mr={5}><Ico s={16} c="#555"><rect x="2" y="1" width="10" height="13" /><rect x="4" y="3" width="6" height="8" fill="#555" /></Ico></StatusBtn>
                <StatusBtn $w={24} $mr={6}><Ico s={16} c="#555"><path d="M2 15C2 8 6 3 14 2M10 11l4 2.500-4 2.500z" /></Ico></StatusBtn>
                <Hint>按鼠标左键选择梁图元，按右键或 ESC 退出；可以通过回车键及 Shift+\"→←↑\" 光标键在跨之间、上下输入框之间进行切换</Hint>
            </Status>

            <RedBox />
            <RedArrow width="70" height="110" viewBox="0 0 70 110">
                <path d="M12.300 102.300 39.300 23.300 36 19.300 51.700 8.300 52.300 25 45.700 22.700z" fill="#f8201a" />
            </RedArrow>
            <RedNote>点此处任何一个位置都会卡死</RedNote>

            <Tip>
                这里可以处理梁柱节点<br />混凝土了哦~
                <TipBtn>知道了</TipBtn>
                <TipBulb width="32" height="38" viewBox="0 0 32 38" fill="none" stroke="#a9d2f5" strokeWidth="1.300">
                    <path d="M10 24a9 9 0 1 1 12 0l-1 4H11zM12 31h8M13 34h6M13 16l3 3 3-3M16 19v9M16 1v4M2 14h4M26 14h4M5 4l3 3M27 4l-3 3" />
                </TipBulb>
            </Tip>
        </Page>
    );
}
